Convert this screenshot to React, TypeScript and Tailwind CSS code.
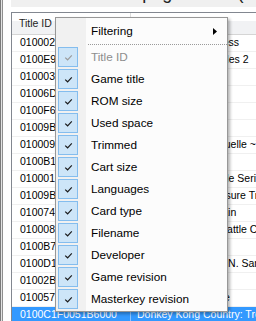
import React from 'react'

const rows: [string, string][] = [
  ['0100025001900000', "Yoku's Island Express"],
  ['0100E95004038000', 'Xenoblade Chronicles 2'],
  ['010003F003A34000', 'Splatoon 2'],
  ['01006DC010326000', 'Celeste'],
  ['0100F6A00A684000', 'Stardew Valley'],
  ['01009B500007C000', 'Hollow Knight'],
  ['0100094009C3A000', 'Atelier Lydie and Suelle ~The Alchemists and the Mysterious Paintings~'],
  ['0100B1A0066DC000', 'Cuphead'],
  ['0100016007154000', 'Picross Retro Puzzle Series'],
  ['01009BF0072D4000', 'Captain Toad: Treasure Tracker'],
  ['0100744001588000', 'Beyond the Mountain'],
  ['010008300C978000', 'Shadow Warriors Battle Chronicles'],
  ['0100B7D0022EE000', 'Dead Cells'],
  ['0100D1B006744000', 'Crash Bandicoot™ N. Sane Trilogy'],
  ['01002B300ECA2000', 'Kirby Star Allies'],
  ['010057D006492000', 'Mario Kart 8 Deluxe'],
  ['0100C1F0051B6000', 'Donkey Kong Country: Tropical Freeze'],
]

const columns = [
  { label: 'Title ID', checked: true, disabled: true },
  { label: 'Game title', checked: true },
  { label: 'ROM size', checked: true },
  { label: 'Used space', checked: true },
  { label: 'Trimmed', checked: true },
  { label: 'Cart size', checked: true },
  { label: 'Languages', checked: true },
  { label: 'Card type', checked: true },
  { label: 'Filename', checked: true },
  { label: 'Developer', checked: true },
  { label: 'Game revision', checked: true },
  { label: 'Masterkey revision', checked: true },
]

function Check({ disabled }: { disabled?: boolean }) {
  return (
    <svg width="9" height="7" viewBox="0 0 9 7">
      <path
        d="M1.2 3.6 L3.6 5.8 L7.8 1.4"
        fill="none"
        stroke={disabled ? '#9a9a9a' : '#1a1a1a'}
        strokeWidth="1.2"
      />
    </svg>
  )
}

function ColumnMenu() {
  return (
    <div className="absolute left-[55px] top-[17px] w-[173px] border border-[#979797] bg-[linear-gradient(to_right,#f1f1f1_0,#f1f1f1_30px,#fcfcfc_30px)] shadow-[2px_2px_3px_rgba(0,0,0,0.3)] pt-[2px] pb-[1px] text-[11.75px] text-black">
      <div className="h-[22px] flex items-center justify-between pl-[35px] pr-[10px]">
        <span>Filtering</span>
        <svg width="4" height="7" viewBox="0 0 4 7">
          <path d="M0 0 L4 3.5 L0 7 Z" fill="#000" />
        </svg>
      </div>
      <div className="h-[4px] pt-[2px] pl-[32px]">
        <div className="border-t border-dotted border-[#9a9a9a]" />
      </div>
      {columns.map((c) => (
        <div key={c.label} className="h-[22px] flex items-center pl-[2px]">
          <div className="w-[20px] h-[20px] border border-[#84bdee] bg-[#cde5f8] flex items-center justify-center">
            {c.checked && <Check disabled={c.disabled} />}
          </div>
          <span className={`ml-[13px] ${c.disabled ? 'text-[#8d8d8d]' : ''}`}>
            {c.label}
          </span>
        </div>
      ))}
    </div>
  )
}

export default function App() {
  return (
    <div className="relative w-[256px] h-[321px] overflow-hidden bg-white flex font-['Liberation_Sans',Arial,sans-serif]">
      <div className="w-px bg-[#7a7a7a]" />
      <div className="w-px bg-[#e3e3e3]" />
      <div className="w-px bg-[#8f8f8f]" />
      <div className="w-[8px]" />
      <div className="flex-1 min-w-0 flex flex-col">
        {/* big label above the list, scrolled so only descenders show */}
        <div className="h-[7px] shrink-0 bg-[#f0f0f0] overflow-hidden">
          <div className="relative bottom-[16px] whitespace-nowrap text-[18px] leading-[18px] text-[#222] pl-[66px]">
            Title list page 1 of 1 (17 titles)
          </div>
        </div>
        <div className="h-[5px] shrink-0" />
        <div className="flex-1 border-l border-t border-[#828790] flex flex-col overflow-hidden">
          <div className="h-[22px] shrink-0 flex border-b border-[#d5d5d5] bg-[linear-gradient(#fff_0,#fff_40%,#f1f2f4_40%,#f1f2f4_100%)] text-[10.5px] text-[#1e1e1e]">
            <div className="w-[119px] shrink-0 border-r border-[#dcdcdc] pl-[7px] pt-[1px] flex items-center">
              Title ID
            </div>
            <div className="pl-[6px] pt-[1px] flex items-center">Game title</div>
          </div>
          {rows.map(([id, title], i) => {
            const selected = i === rows.length - 1
            return (
              <div
                key={id}
                className={`h-[17px] shrink-0 flex items-center whitespace-nowrap text-[10.5px] border-b ${
                  selected
                    ? 'bg-[#3399ff] text-white border-[#3399ff]'
                    : 'text-black border-[#f0f0f0]'
                }`}
              >
                <div
                  className={`w-[119px] shrink-0 h-full flex items-center pl-[8px] border-r ${
                    selected ? 'border-[#8cc4ff]' : 'border-[#f0f0f0]'
                  }`}
                >
                  {id}
                </div>
                <div className="pl-[6px]">{title}</div>
              </div>
            )
          })}
        </div>
      </div>
      <ColumnMenu />
    </div>
  )
}
